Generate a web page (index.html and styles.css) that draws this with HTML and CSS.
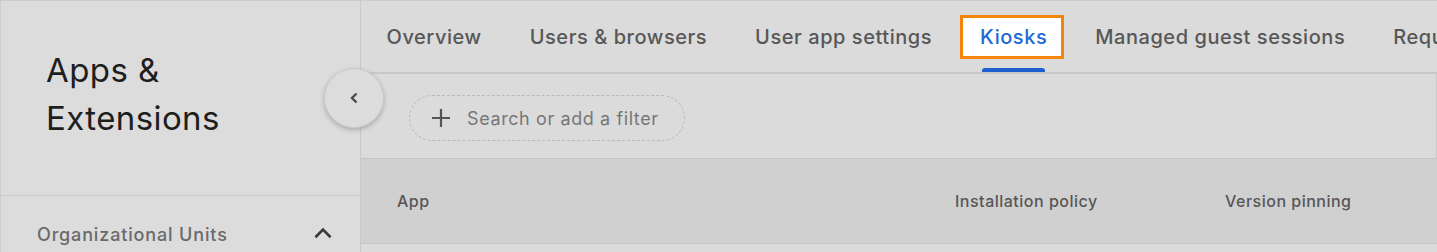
FILE: index.html
```html
<!DOCTYPE html>
<html lang="en">
<head>
    <meta charset="UTF-8">
    <meta name="viewport" content="width=device-width, initial-scale=1.0">
    <title>Apps &amp; Extensions</title>
    <link rel="stylesheet" href="styles.css">
</head>
<body>
    <div class="page">
        <aside class="sidebar">
            <div class="sidebar-head">
                <h1>Apps &amp;<br>Extensions</h1>
            </div>
            <div class="ou-row">
                <span>Organizational Units</span>
                <svg class="ou-chevron" viewBox="0 0 24 24">
                    <path d="M5 15l7-7 7 7" />
                </svg>
            </div>
        </aside>
        <button class="collapse-btn" aria-label="Collapse">
            <svg viewBox="0 0 24 24">
                <path d="M14.5 7.5L10 12l4.5 4.5" />
            </svg>
        </button>
        <main class="main">
            <nav class="tabs">
                <a class="tab" href="#">Overview</a>
                <a class="tab" href="#">Users &amp; browsers</a>
                <a class="tab" href="#">User app settings</a>
                <a class="tab active" href="#"><span class="focus-box">Kiosks</span></a>
                <a class="tab" href="#">Managed guest sessions</a>
                <a class="tab" href="#">Requests</a>
            </nav>
            <div class="filter-bar">
                <div class="filter-chip">
                    <svg class="plus" viewBox="0 0 24 24">
                        <path d="M12 3v18M3 12h18" />
                    </svg>
                    <span>Search or add a filter</span>
                </div>
            </div>
            <div class="table-head">
                <div>App</div>
                <div>Installation policy</div>
                <div>Version pinning</div>
            </div>
        </main>
    </div>
</body>
</html>
```

FILE: styles.css
```css
* {
    margin: 0;
    padding: 0;
    box-sizing: border-box;
}
body {
    font-family: Inter, Roboto, "Noto Sans", Arial, sans-serif;
    background-color: #dadada;
    width: 1437px;
    height: 252px;
    overflow: hidden;
}
.page {
    position: relative;
    display: flex;
    height: 252px;
    border-top: 1px solid #cdcdcd;
    border-left: 1px solid #cdcdcd;
    background: #dbdbdb;
}
.sidebar {
    width: 360px;
    flex-shrink: 0;
    background: #dcdcdc;
    border-right: 1px solid #c9c9c9;
}
.sidebar-head {
    height: 195px;
    padding: 45px 0 0 45px;
    border-bottom: 1px solid #cacaca;
}
.sidebar-head h1 {
    font-size: 33px;
    line-height: 48px;
    font-weight: 400;
    letter-spacing: 0.4px;
    color: #1e1e1e;
}
.ou-row {
    display: flex;
    align-items: center;
    justify-content: space-between;
    height: 56px;
    padding: 20px 24px 0 36px;
    font-size: 18px;
    font-weight: 500;
    letter-spacing: 0.85px;
    color: #6a6a6a;
}
.ou-chevron {
    width: 26px;
    height: 26px;
    fill: none;
    stroke: #3a3a3a;
    stroke-width: 2.4;
}
.collapse-btn {
    position: absolute;
    left: 323px;
    top: 67px;
    width: 60px;
    height: 60px;
    border-radius: 50%;
    border: 1px solid #cbcbcb;
    background: #dcdcdc;
    box-shadow: 0 2px 5px rgba(0, 0, 0, 0.22);
    display: flex;
    justify-content: center;
    align-items: center;
}
.collapse-btn svg {
    width: 24px;
    height: 24px;
    fill: none;
    stroke: #4a4a4a;
    stroke-width: 2.4;
}
.main {
    flex: 1;
    min-width: 0;
    display: flex;
    flex-direction: column;
    overflow: hidden;
}
.tabs {
    display: flex;
    align-items: center;
    height: 73px;
    padding-left: 1px;
    border-bottom: 2px solid #c8c8c8;
    white-space: nowrap;
}
.tab {
    position: relative;
    display: flex;
    align-items: center;
    height: 71px;
    padding: 0 24px;
    font-size: 20px;
    font-weight: 500;
    letter-spacing: 0.55px;
    color: #575757;
    text-decoration: none;
}
.tab:first-child {
    padding-left: 24.5px;
}
.tab.active {
    color: #2169d6;
}
.tab.active::after {
    content: "";
    position: absolute;
    left: 26px;
    right: 26px;
    bottom: 0;
    height: 4px;
    border-radius: 3px 3px 0 0;
    background: #1d5fd0;
}
.focus-box {
    display: inline-block;
    line-height: 20px;
    padding: 9px 14px 9px 17px;
    margin: 0 -17px 0 -20px;
    border: 3px solid #f5850a;
    background: #fff;
}
.filter-bar {
    display: flex;
    align-items: center;
    height: 85px;
    padding: 4px 0 0 48px;
    border-bottom: 1px solid #c6c6c6;
    border-right: 1px solid #c9c9c9;
}
.filter-chip {
    display: flex;
    align-items: center;
    gap: 14px;
    width: 276px;
    height: 46px;
    padding-left: 19px;
    border: 1px dashed #b9b9b9;
    border-radius: 23px;
    font-size: 18px;
    letter-spacing: 0.6px;
    color: #777;
}
.plus {
    width: 24px;
    height: 24px;
    fill: none;
    stroke: #555;
    stroke-width: 2.2;
}
.table-head {
    display: grid;
    grid-template-columns: 558px 270px 1fr;
    align-items: center;
    height: 85px;
    padding-left: 36px;
    background: #d0d0d0;
    border-bottom: 1px solid #c4c4c4;
    font-size: 16px;
    font-weight: 500;
    letter-spacing: 0.5px;
    color: #565656;
}
```
